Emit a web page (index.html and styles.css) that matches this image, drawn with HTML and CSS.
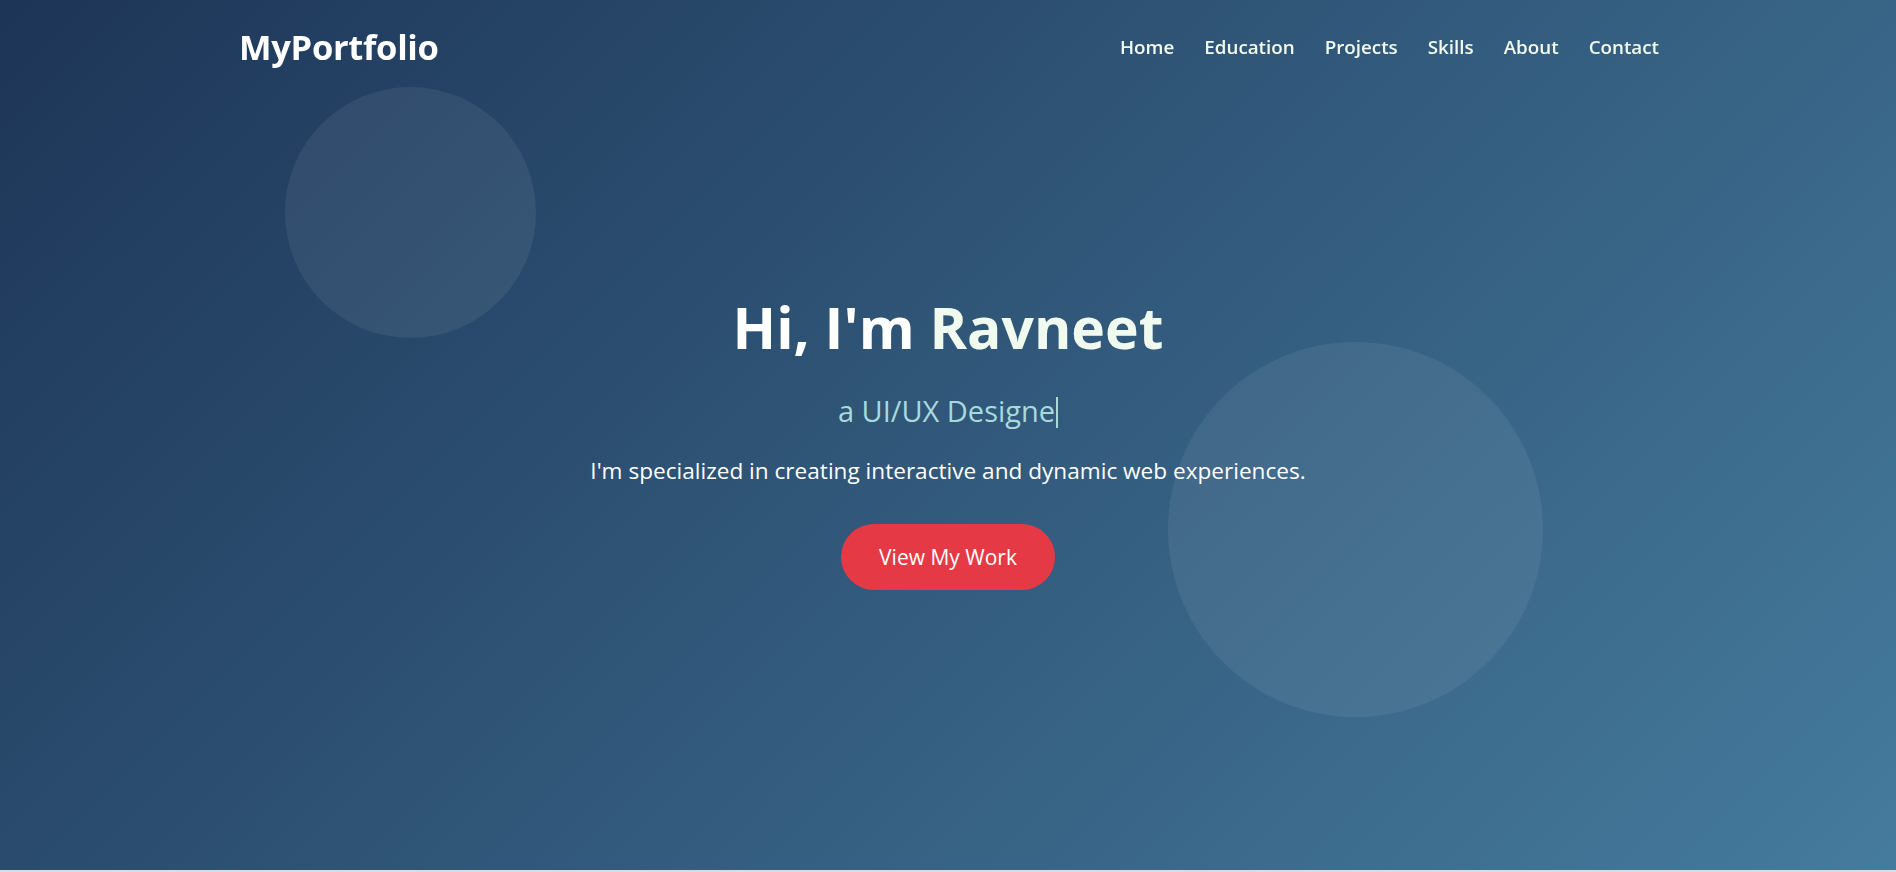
FILE: index.html
```html
<!DOCTYPE html>
<html lang="en">
<head>
<meta charset="utf-8">
<title>MyPortfolio</title>
<link rel="stylesheet" href="styles.css">
</head>
<body>
<header class="site-header">
  <div class="container header-inner">
    <a class="logo" href="#">MyPortfolio</a>
    <nav class="nav">
      <a href="#">Home</a>
      <a href="#">Education</a>
      <a href="#">Projects</a>
      <a href="#">Skills</a>
      <a href="#">About</a>
      <a href="#">Contact</a>
    </nav>
  </div>
</header>
<section class="hero">
  <span class="bubble bubble-one"></span>
  <span class="bubble bubble-two"></span>
  <div class="hero-content">
    <h1 class="hero-title">Hi, I'm <span class="name">Ravneet</span></h1>
    <p class="hero-role">a UI/UX Designe<span class="cursor"></span></p>
    <p class="hero-text">I'm specialized in creating interactive and dynamic web experiences.</p>
    <a class="btn" href="#">View My Work</a>
  </div>
</section>
</body>
</html>
```
FILE: styles.css
```css
* { box-sizing: border-box; }
html, body { margin: 0; padding: 0; }
body {
  font-family: "Open Sans", "Noto Sans", sans-serif;
  background: #dcdcdc;
  color: #fff;
  overflow: hidden;
}
a { text-decoration: none; color: inherit; }

.site-header {
  position: fixed;
  top: 0;
  left: 0;
  right: 0;
  z-index: 10;
}
.container {
  width: 75%;
  margin: 0 auto;
}
.header-inner {
  display: flex;
  align-items: center;
  justify-content: space-between;
  padding: 26px 0;
}
.logo {
  margin-left: 2px;
  font-size: 34.5px;
  font-weight: 700;
  line-height: 42px;
  color: #fff;
  letter-spacing: -0.3px;
}
.nav {
  display: flex;
  gap: 30px;
}
.nav a {
  font-size: 18.8px;
  font-weight: 600;
  color: #f1faee;
}

.hero {
  position: relative;
  height: 870px;
  background: linear-gradient(135deg, #1d3557 0%, #457b9d 100%);
  display: flex;
  align-items: center;
  justify-content: center;
  padding-top: 9px;
  overflow: hidden;
}
.bubble {
  position: absolute;
  border-radius: 50%;
  background: rgba(255, 255, 255, 0.065);
}
.bubble-one {
  width: 251px;
  height: 251px;
  left: 285px;
  top: 87px;
}
.bubble-two {
  width: 375px;
  height: 375px;
  left: 1168px;
  top: 342px;
}
.hero-content {
  position: relative;
  text-align: center;
  display: flex;
  flex-direction: column;
  align-items: center;
}
.hero-title {
  margin: 0;
  font-size: 57px;
  line-height: 77px;
  font-weight: 700;
  color: #fff;
}
.name { color: #f1faee; }
.hero-role {
  margin: 27px 0 0;
  font-size: 29px;
  line-height: 35px;
  color: #a8dadc;
}
.cursor {
  display: inline-block;
  width: 2px;
  height: 31px;
  background: #a8dadc;
  vertical-align: -6px;
  margin-left: 1px;
}
.hero-text {
  margin: 28px 0 0;
  font-size: 22.6px;
  line-height: 30px;
  color: #fff;
}
.btn {
  margin-top: 38px;
  display: inline-block;
  background: #e63946;
  color: #fff;
  font-size: 21px;
  line-height: 28px;
  padding: 19px 38px;
  border-radius: 40px;
}
```
